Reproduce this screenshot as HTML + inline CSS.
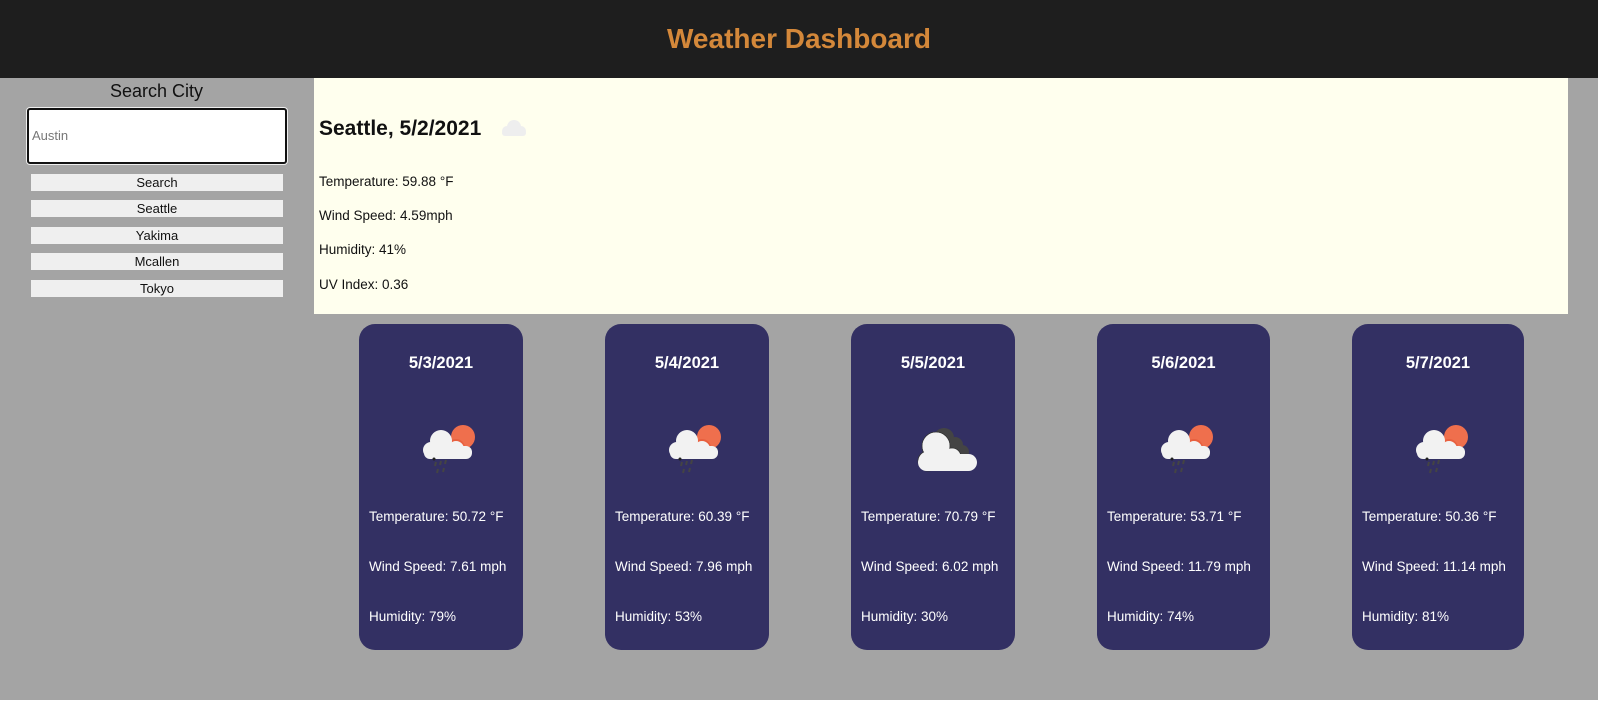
<!DOCTYPE html>
<html><head><style>
*{margin:0;padding:0;box-sizing:border-box}
body{width:1598px;height:713px;background:#fff;font-family:"Liberation Sans",sans-serif;position:relative;overflow:hidden}
.hdr{position:absolute;left:0;top:0;width:1598px;height:78px;background:#1e1e1e;color:#d4883a;font-weight:bold;font-size:28px;text-align:center;line-height:78px}
.bg{position:absolute;left:0;top:78px;width:1598px;height:622px;background:#a4a4a4}
.sc{position:absolute;left:0;top:81px;width:313px;text-align:center;font-size:18px;color:#111}
.inp{position:absolute;left:27px;top:108px;width:260px;height:56px;background:#fff;border:2px solid #111;border-radius:3px;box-shadow:0 0 0 1px #eee;font-size:13px;color:#777;padding-left:3px;line-height:52px}
.btn{position:absolute;left:31px;width:252px;height:17px;background:#efefef;font-size:13px;text-align:center;line-height:17px;color:#111}
.main{position:absolute;left:314px;top:78px;width:1254px;height:236px;background:#ffffee;color:#111}
.main h2{position:absolute;left:5px;top:39px;font-size:21px}
.main p{position:absolute;left:5px;font-size:13.5px}
.card{position:absolute;top:324px;height:326px;background:#333063;border-radius:16px;color:#fff}
.card h3{position:absolute;top:30px;width:100%;text-align:center;font-size:16.5px}
.card p{position:absolute;left:10px;font-size:13.5px}
.card svg{position:absolute;top:0}
</style></head><body>
<div class="hdr">Weather Dashboard</div>
<div class="bg"></div>
<div class="sc">Search City</div>
<div class="inp">Austin</div>
<div class="btn" style="top:174px">Search</div>
<div class="btn" style="top:200px">Seattle</div>
<div class="btn" style="top:227px">Yakima</div>
<div class="btn" style="top:253px">Mcallen</div>
<div class="btn" style="top:280px">Tokyo</div>
<div class="main">
<h2>Seattle, 5/2/2021</h2>
<svg style="position:absolute;left:184px;top:39px" width="32" height="22"><g fill="#eeeeee"><circle cx="16" cy="10" r="7"/><circle cx="9" cy="14" r="5"/><circle cx="23" cy="14" r="5"/><rect x="4" y="13" width="24" height="6" rx="3"/></g></svg>
<p style="top:96px">Temperature: 59.88 °F</p>
<p style="top:130px">Wind Speed: 4.59mph</p>
<p style="top:164px">Humidity: 41%</p>
<p style="top:199px">UV Index: 0.36</p>
</div>
<svg width="0" height="0" style="position:absolute"><defs>
<g id="rain"><circle cx="104" cy="113" r="12" fill="#ef6f4d"/><circle cx="97" cy="124" r="9" fill="#e8603f"/><g fill="#f2f2f2"><circle cx="82" cy="117" r="11"/><circle cx="97" cy="125" r="8"/><circle cx="72" cy="126" r="8"/><rect x="65" y="122" width="48" height="13" rx="6"/></g><g stroke="#444" stroke-width="2"><path d="M77 138l-1 4M82 137l-1 4M87 136l-1 4M79 145l-1 4M85 144l-1 4"/></g><circle cx="75" cy="135" r="1.5" fill="#222"/></g>
<g id="cl"><g fill="#444"><circle cx="93" cy="114" r="10"/><circle cx="104" cy="121" r="8"/><circle cx="111" cy="128" r="7"/><rect x="88" y="122" width="28" height="14" rx="6"/></g><g fill="#f2f2f2" stroke="#333" stroke-width="0.8"><circle cx="85" cy="122" r="14"/><circle cx="101" cy="133" r="9"/><circle cx="77" cy="137" r="10"/></g><rect x="67" y="130" width="59" height="17" rx="8.5" fill="#f2f2f2"/><circle cx="85" cy="122" r="13.5" fill="#f2f2f2"/><circle cx="101" cy="133" r="8.5" fill="#f2f2f2"/></g>
</defs></svg>
<div class="card" style="left:359px;width:164px"><h3>5/3/2021</h3><svg width="164" height="160"><use href="#rain"/></svg><p style="top:185px">Temperature: 50.72 °F</p><p style="top:235px">Wind Speed: 7.61 mph</p><p style="top:285px">Humidity: 79%</p></div>
<div class="card" style="left:605px;width:164px"><h3>5/4/2021</h3><svg width="164" height="160"><use href="#rain"/></svg><p style="top:185px">Temperature: 60.39 °F</p><p style="top:235px">Wind Speed: 7.96 mph</p><p style="top:285px">Humidity: 53%</p></div>
<div class="card" style="left:851px;width:164px"><h3>5/5/2021</h3><svg width="164" height="160"><use href="#cl"/></svg><p style="top:185px">Temperature: 70.79 °F</p><p style="top:235px">Wind Speed: 6.02 mph</p><p style="top:285px">Humidity: 30%</p></div>
<div class="card" style="left:1097px;width:173px"><h3>5/6/2021</h3><svg width="173" height="160"><use href="#rain"/></svg><p style="top:185px">Temperature: 53.71 °F</p><p style="top:235px">Wind Speed: 11.79 mph</p><p style="top:285px">Humidity: 74%</p></div>
<div class="card" style="left:1352px;width:172px"><h3>5/7/2021</h3><svg width="172" height="160"><use href="#rain"/></svg><p style="top:185px">Temperature: 50.36 °F</p><p style="top:235px">Wind Speed: 11.14 mph</p><p style="top:285px">Humidity: 81%</p></div>
</body></html>
